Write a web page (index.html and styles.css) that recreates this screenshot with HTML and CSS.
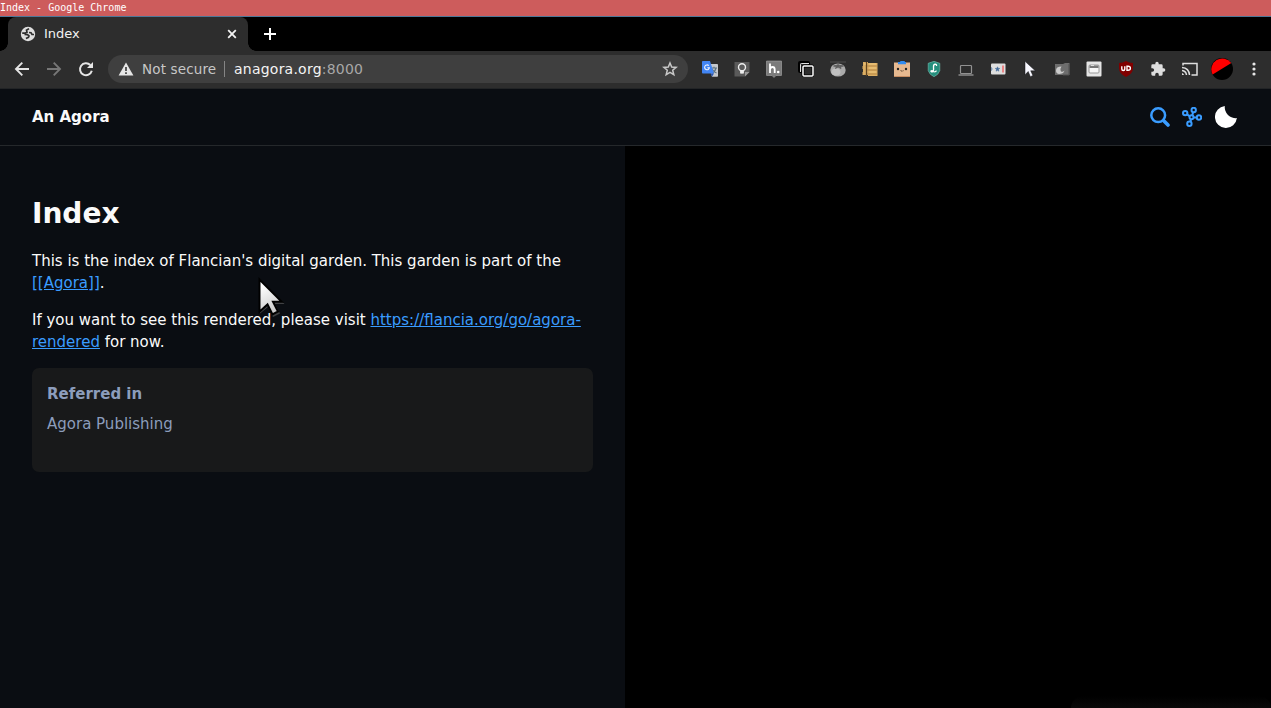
FILE: index.html
```html
<!DOCTYPE html>
<html lang="en">
<head>
<meta charset="utf-8">
<title>Index</title>
<link rel="stylesheet" href="styles.css">
</head>
<body>
<div class="titlebar">Index - Google Chrome</div>
<div class="tabstrip">
  <div class="tab">
    <svg class="globe" width="16" height="16" viewBox="0 0 16 16"><circle cx="8" cy="8" r="7.2" fill="#dedede"/><path d="M9 2.600 6.500 4.200 7 6.300 4.800 7.200H2.200M4.500 8.300l3 .3 1.500 1.300-.6 1.500-2.500 1.100M9 6.500l2 .2 1 1.800h2" fill="none" stroke="#2d2d2d" stroke-width="1.700"/></svg>
    <span class="tab-title">Index</span>
    <svg class="close" width="10" height="10" viewBox="0 0 10 10"><path d="m1.200 1.200 7.600 7.600m0-7.600L1.200 8.800" stroke="#f4f4f4" stroke-width="1.800"/></svg>
  </div>
  <svg class="plus" width="12" height="12" viewBox="0 0 12 12"><path d="M6 0v12M0 6h12" stroke="#fff" stroke-width="2"/></svg>
</div>
<div class="toolbar">
  <div class="nav">
    <svg width="16" height="16" viewBox="0 0 16 16"><path d="M15 8H2m6.300-6.300L2 8l6.300 6.300" fill="none" stroke="#e6e6e6" stroke-width="1.900"/></svg>
    <svg width="16" height="16" viewBox="0 0 16 16"><path d="M1 8h13M7.700 1.700 14 8l-6.300 6.300" fill="none" stroke="#777" stroke-width="1.900"/></svg>
    <svg width="16" height="16" viewBox="0 0 16 16"><path d="M13.800 9.800A6 6 0 1 1 12.300 4" fill="none" stroke="#e6e6e6" stroke-width="2"/><path d="M15 1v6H9z" fill="#e6e6e6"/></svg>
  </div>
  <div class="omnibox">
    <svg width="16" height="16" viewBox="0 0 16 16"><path d="M8 1.500 15.400 14.500H.6z" fill="#e6e6e6"/><path d="M8 6v4M8 11.200V13" stroke="#3f3f3f" stroke-width="1.700"/></svg>
    <span class="secure">Not secure</span>
    <span class="divider"></span>
    <span class="url">anagora.org<span class="port">:8000</span></span>
    <svg class="star" width="16" height="16" viewBox="0 0 16 16"><path d="m8 2 1.700 4.100 4.400.3-3.400 2.900 1.100 4.400L8 11.300l-3.800 2.400 1.100-4.400-3.400-2.900 4.400-.3z" fill="none" stroke="#c8c8c8" stroke-width="1.500"/></svg>
  </div>
  <div class="extensions">
    <svg width="16" height="16" viewBox="0 0 16 16"><path d="M6 3h9.200q.8 0 .8.800V15q0 .8-.8.800H10z" fill="#c5c8cc"/><path d="M9 7h6M12 5.700V7m2 0q-1 4-4 5m0-4q2 3 4.500 4" stroke="#5b7180" stroke-width="1.100" fill="none"/><path d="M.8 0H8l4 12.500H.8Q0 12.500 0 11.700V.8Q0 0 .8 0z" fill="#4285f4"/><path d="M8.500 12.500H12L10 15.700z" fill="#2a55ad"/><path d="M6.800 4.700A2.400 2.400 0 1 0 7.400 6.700H5.300" fill="none" stroke="#eef4ff" stroke-width="1.100"/></svg>
    <svg width="16" height="16" viewBox="0 0 16 16"><path d="M.5 1H15.500v10L11 15.500H.5z" fill="#5a5a5a"/><path d="m11 15.500 4.500-4.500H11z" fill="#999"/><circle cx="8" cy="6.200" r="3.500" fill="none" stroke="#eee" stroke-width="1.400"/><path d="M6.500 9.200v3h3v-3" fill="#eee" stroke="#eee" stroke-width=".8"/></svg>
    <svg width="16" height="18" viewBox="0 0 16 18"><path d="M1 1h14q1 0 1 1v12.500q0 1-1 1h-5l-2 2-2-2H1q-1 0-1-1V2q0-1 1-1z" fill="#7b7b7b" stroke="#a5a5a5" stroke-width=".6"/><path d="M4 3.500V13M4 9.500Q4.300 7 6.500 7T8.700 9.500V13" fill="none" stroke="#fff" stroke-width="1.800"/><circle cx="12.200" cy="12" r="1.300" fill="#fff"/></svg>
    <svg width="16" height="16" viewBox="0 0 16 16"><rect x="1" y="1" width="10" height="10" rx="1" fill="none" stroke="#000" stroke-width="2"/><path d="M2.500 11V3.500q0-1 1-1H11" fill="none" stroke="#ddd"/><rect x="5" y="5" width="10" height="10" rx="1" fill="#2d2d2d" stroke="#000" stroke-width="3"/><rect x="5" y="5" width="10" height="10" rx="1" fill="none" stroke="#fff" stroke-width="1.500"/></svg>
    <svg width="16" height="16" viewBox="0 0 16 16"><ellipse cx="8" cy="9" rx="7.700" ry="6.600" fill="#aaa"/><ellipse cx="6" cy="11" rx="4.500" ry="3.500" fill="#c1c1c1"/><path d="M0 1h16M8 1v5M8 4 3.500 5l3 .5-1 2L8 6l3 1.500-.5-2 3-.5z" stroke="#555" fill="#666" stroke-width=".8"/></svg>
    <svg width="16" height="16" viewBox="0 0 16 16"><path d="M1 1h5v1h9.500v13H6v-1H.5v-3H1V8H.5V5H1z" fill="#dcae62"/><path d="M4.500 1v14" stroke="#60431f" stroke-width="1.300"/><path d="M5 5h10M5 9h10M5 13h10" stroke="#a8793d" stroke-width=".7"/><path d="M2 3h2m3 0h7M7 7h7m-7 4h7" stroke="#f2cf89" stroke-width=".8"/></svg>
    <svg width="16" height="16" viewBox="0 0 16 16"><path d="M0 1.500h16V16H0z" fill="#e6b990"/><path d="M4 3.200V1h2L6.500 0h4l.5 1h1v2.200z" fill="#328cf0"/><path d="M0 15.500h16" stroke="#c78d62"/><circle cx="4" cy="8" r="1.200" fill="#222"/><circle cx="12" cy="8" r="1.200" fill="#222"/><path d="m6.500 9.500.8.700.7-.7.700.7.800-.7" fill="none" stroke="#432" stroke-width=".8"/></svg>
    <svg width="16" height="16" viewBox="0 0 16 16"><path d="m8 .3 5.800 2v7.300Q12.500 13.800 8 15.700 3.500 13.800 2.200 9.600V2.300z" fill="#258f7d" stroke="#78bfb1" stroke-width=".6"/><path d="M10.500 5Q10.800 3.200 9.200 3.200 7.300 3.500 7.500 6q.5 4-1 4.800-1.800.3-1.500-.8 1-.8 2.500.5 1.800 1 3-.8" fill="none" stroke="#fff" stroke-width="1.300"/></svg>
    <svg width="16" height="16" viewBox="0 0 16 16"><rect x="2.500" y="4.500" width="11" height="8" rx=".8" fill="none" stroke="#929292" stroke-width="1.200"/><path d="M.5 14h15" stroke="#929292" stroke-width="1.400"/></svg>
    <svg width="16" height="16" viewBox="0 0 16 16"><rect x="1" y="2.500" width="14.500" height="11" rx="1" fill="#dedede"/><path d="M1.500 6v4M1 8h2M7.500 5.800l.6 1.500 1.700.1-1.300 1.100.4 1.700-1.400-.9-1.400.9.400-1.700-1.300-1.100 1.700-.1z" fill="#436b9a" stroke="#436b9a" stroke-width=".5"/><path d="M13 4.500v7" stroke="#ee5557" stroke-width="1.300"/></svg>
    <svg width="16" height="16" viewBox="0 0 16 16"><path d="M3 .3v13.500L6.200 10.500l2.200 5.200 2.500-1.200-2.200-4.700h4.600z" fill="#f8f8ff" stroke="#14161a" stroke-width=".5"/></svg>
    <svg width="16" height="16" viewBox="0 0 16 16"><path d="M1 3h8l2-1h4.500v12H1z" fill="#6d6d6d"/><path d="M15 3v11H9" fill="none" stroke="#505050"/><path d="M7.500 5.500Q2 5.500 2 9.500t4.500 3.300q3 0 4-3.300Q8.500 11.800 6.800 10.200q-1.200-2 .7-4.700z" fill="#ccc"/></svg>
    <svg width="16" height="16" viewBox="0 0 16 16"><rect x=".5" y=".5" width="15" height="15" rx="1" fill="#e5e5e5"/><rect x="3" y="4" width="10" height="8" rx="1" fill="#f6f6f6" stroke="#999"/><path d="M3.500 7V4.500h9V7z" fill="#777"/><path d="M5 4.500h3" stroke="#ddd"/></svg>
    <svg width="16" height="16" viewBox="0 0 16 16"><path d="M8 0q3 2 7 2.100v5Q15 13 8 16 1 13 1 7.100v-5Q5 2 8 0z" fill="#800000"/><path d="M3.800 5.300v2.700q0 1.500 1.500 1.500t1.500-1.500V5.300M9 9.300v-4h1q2.400 0 2.400 2t-2.400 2z" fill="none" stroke="#fff" stroke-width="1.400"/></svg>
    <svg width="16" height="16" viewBox="0 0 24 24"><path fill="#dedede" d="M20.500 11H19V7a2 2 0 0 0-2-2h-4V3.500a2.500 2.500 0 0 0-5 0V5H4a2 2 0 0 0-2 2v3.800h1.500a2.700 2.700 0 0 1 0 5.400H2V20a2 2 0 0 0 2 2h3.800v-1.500a2.700 2.700 0 0 1 5.400 0V22H17a2 2 0 0 0 2-2v-4h1.500a2.500 2.500 0 0 0 0-5z"/></svg>
    <svg width="16" height="16" viewBox="0 0 16 16"><path d="M1 4.500V2.500h14v11.500H9.500M0 6.500q7 .5 7.500 7.500M0 9.500q4 .5 4.500 4.500" fill="none" stroke="#dedede" stroke-width="1.500"/><path d="M0 12q1.800.3 2 2H0z" fill="#dedede"/></svg>
  </div>
  <svg class="avatar" width="22" height="22" viewBox="0 0 22 22"><circle cx="11" cy="11" r="11" fill="#000"/><path d="M1.600 16.600A11 11 0 0 1 20.300 5.100z" fill="#f00"/></svg>
  <svg class="more" width="4" height="14" viewBox="0 0 4 14"><g fill="#e6e6e6"><circle cx="2" cy="2" r="1.600"/><circle cx="2" cy="7" r="1.600"/><circle cx="2" cy="12" r="1.600"/></g></svg>
</div>
<header class="site-header">
  <span class="brand">An Agora</span>
  <div class="actions">
    <svg width="20" height="20" viewBox="0 0 20 20"><circle cx="8.200" cy="8.200" r="6.900" fill="none" stroke="#3a9cff" stroke-width="2.500"/><path d="m14 14 4 4" stroke="#3a9cff" stroke-width="3.600" stroke-linecap="round"/></svg>
    <svg class="graph" width="20" height="20" viewBox="0 0 20 20"><g fill="none" stroke="#3a9cff" stroke-width="2"><circle cx="9.500" cy="10.300" r="2"/><circle cx="3.200" cy="6.100" r="2.200"/><circle cx="11.700" cy="3" r="2.200"/><circle cx="17" cy="10.500" r="2.200"/><circle cx="7.400" cy="16.700" r="2.200"/><path d="m5 7.400 2.900 1.900M11.100 5.200l-.8 3.100M12 10.500h2.700M9 12.700 8.200 15"/></g></svg>
    <svg class="moon" width="22" height="22" viewBox="0 0 22 22"><path d="M9.800 0A11 11 0 1 0 21.900 12.100 11 11 0 0 1 9.800 0z" fill="#fff"/></svg>
  </div>
</header>
<div class="page">
  <main class="content">
    <h1>Index</h1>
    <p>This is the index of Flancian's digital garden. This garden is part of the <a>[[Agora]]</a>.</p>
    <p>If you want to see this rendered, please visit <a>https://flancia.org/go/agora-<br>rendered</a> for now.</p>
    <section class="card">
      <h2>Referred in</h2>
      <div>Agora Publishing</div>
    </section>
  </main>
  <aside class="side"><div class="glow"></div></aside>
</div>
<svg class="pointer" width="32" height="46" viewBox="0 0 32 46"><defs><linearGradient id="shade" x1="0" y1="0" x2=".3" y2="1"><stop offset=".2" stop-color="#fff"/><stop offset="1" stop-color="#ccc"/></linearGradient></defs><path d="M3 3v34.500l8-6.500 5 10 7-3.500-5-9.500h9.500z" fill="#666" opacity=".6"/><path d="M2.500 3.500v32.300l8-7.300 5 10 5.500-3-5-9.800h8.700z" fill="url(#shade)" stroke="#000" stroke-width="2"/></svg>
</body>
</html>
```
FILE: styles.css
```css
* { box-sizing: border-box; }
body {
  margin: 0;
  height: 708px;
  overflow: hidden;
  display: flex;
  flex-direction: column;
  background: #0a0d12;
  color: #fafafa;
  font-family: "DejaVu Sans", sans-serif;
}
svg { display: block; flex: none; }
.titlebar {
  height: 17px;
  flex: none;
  background: #cd5c5c;
  border-bottom: 1px solid #4d7899;
  font: 10px/15px "DejaVu Sans Mono", monospace;
  color: #fff;
}
.tabstrip {
  height: 34px;
  flex: none;
  display: flex;
  align-items: center;
  background: #000;
  padding-left: 8px;
}
.tab {
  position: relative;
  width: 240px;
  height: 34px;
  padding: 0 11px 0 12px;
  display: flex;
  align-items: center;
  background: #2d2d2d;
  border-radius: 8px 8px 0 0;
  font-size: 13px;
}
.tab::before, .tab::after {
  content: "";
  position: absolute;
  bottom: 0;
  width: 8px;
  height: 8px;
}
.tab::before { left: -8px; background: radial-gradient(circle at 0 0, #000 7.5px, #2d2d2d 8px); }
.tab::after { right: -8px; background: radial-gradient(circle at 100% 0, #000 7.5px, #2d2d2d 8px); }
.tab-title { margin-left: 8px; padding-bottom: 2px; color: #f1f1f1; }
.close { margin-left: auto; }
.plus { margin-left: 16px; }
.toolbar {
  height: 38px;
  flex: none;
  display: flex;
  align-items: center;
  background: #2d2d2d;
  border-bottom: 1px solid #222426;
  padding: 0 15px 1px 14px;
}
.nav { display: flex; gap: 16px; }
.omnibox {
  width: 580px;
  height: 28px;
  margin-left: 14px;
  padding: 0 10px;
  display: flex;
  align-items: center;
  border-radius: 14px;
  background: #3f3f3f;
  font-size: 14px;
}
.secure { width: 74px; margin-left: 8px; color: #c7c7c7; font-size: 13.5px; letter-spacing: 0.15px; white-space: nowrap; }
.divider { width: 1px; height: 16px; margin: 0 9px 0 8px; background: #858585; }
.url { color: #f4f4f4; letter-spacing: 0.23px; }
.port { color: #a8a8a8; }
.star { margin-left: auto; }
.extensions { display: flex; align-items: center; gap: 16px; margin-left: 14px; }
.avatar { margin-left: 13px; }
.more { margin-left: auto; }
.site-header {
  height: 57px;
  flex: none;
  display: flex;
  align-items: center;
  justify-content: space-between;
  padding: 0 34px 0 32px;
  border-bottom: 1px solid #25282b;
}
.brand { font-weight: bold; font-size: 15px; }
.actions { display: flex; align-items: center; }
.graph { margin-left: 12px; }
.moon { margin-left: 13px; }
.page { flex: 1; display: flex; min-height: 0; }
.content { width: 625px; padding: 51px 32px 0; font-size: 15px; line-height: 22px; }
h1 { margin: 0 0 19px; font-size: 28px; line-height: 34px; }
p { margin: 0 0 15px; }
a { color: #3a9cff; text-decoration: underline; }
.card {
  height: 104px;
  padding: 15px;
  border-radius: 7px;
  background: #18191a;
  color: #8c9dbc;
}
h2 { margin: 0 0 8px; font-size: 15px; line-height: 22px; }
.side { flex: 1; display: flex; align-items: flex-end; justify-content: flex-end; background: #000; }
.glow { width: 200px; height: 12px; background: linear-gradient(#000, #090909); border-radius: 12px 12px 0 0; }
.pointer { position: absolute; left: 257px; top: 276px; }
```
